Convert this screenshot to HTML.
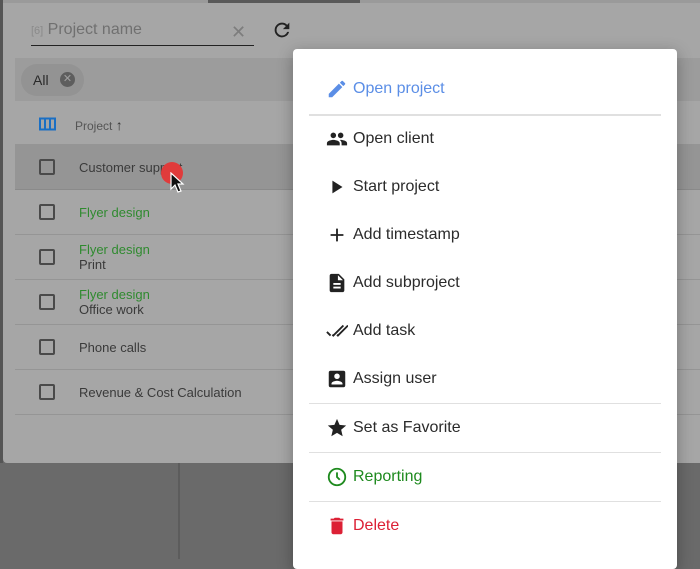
<!DOCTYPE html>
<html style="background:#6a6a6a"><head><style>
*{margin:0;padding:0;box-sizing:border-box}
body{width:700px;height:559px;overflow:hidden;background:#6a6a6a;font-family:"Liberation Sans",Roboto,sans-serif;position:relative}
.abs{position:absolute}
.dlg{left:3px;top:0;width:697px;height:463px;background:#a6a6a6;border-radius:0 0 0 4px}
.row{position:absolute;left:15px;width:700px;border-bottom:1px solid #959595}
.cb{position:absolute;left:24px;width:16px;height:16px;border:2px solid #4a4a4a;border-radius:2px}
.t{position:absolute;left:64px;font-size:13px;color:#3a3a3a}
.g{color:#2f8a2f}
.menu{left:293px;top:49px;width:384px;height:520px;background:#fff;border-radius:4px;box-shadow:0 4px 16px rgba(0,0,0,.3)}
.it{position:absolute;left:0;width:384px;height:24px;font-size:16px;color:#2b2b2b}
.it svg{position:absolute;left:33px;top:1px;width:22px;height:22px}
.it span{position:absolute;left:60px;top:3px}
.dv{position:absolute;left:16px;width:352px;height:1px;background:#e0e0e0}
</style></head><body>
<div class="abs" style="left:0;top:463px;width:700px;height:96px;background:#6a6a6a"></div>
<div class="abs" style="left:0;top:0;width:3px;height:463px;background:#555"></div>
<div class="abs dlg">
  <div class="abs" style="left:0;top:0;width:697px;height:3px;background:#9a9a9a"></div>
  <div class="abs" style="left:205px;top:0;width:152px;height:3px;background:#595959"></div>
  <div class="abs" style="left:28px;top:21px;font-size:16px;color:#707070"><span style="font-size:11px;color:#8a8a8a">[6]</span> Project name</div>
  <div class="abs" style="left:228px;top:22px;font-size:18px;color:#7d7d7d">✕</div>
  <div class="abs" style="left:28px;top:45px;width:223px;height:1px;background:#222"></div>
  <svg class="abs" style="left:268px;top:19px" width="22" height="22" viewBox="0 0 24 24"><path fill="#222" d="M17.65 6.35A7.96 7.96 0 0 0 12 4a8 8 0 1 0 7.73 10h-2.08A6 6 0 1 1 12 6c1.66 0 3.14.69 4.22 1.78L13 11h7V4l-2.35 2.35z"/></svg>
  <div class="abs" style="left:12px;top:58px;width:685px;height:43px;background:#9c9c9c"></div>
  <div class="abs" style="left:18px;top:64px;width:63px;height:32px;border-radius:16px;background:#939393"></div>
  <div class="abs" style="left:30px;top:72px;font-size:14px;color:#2a2a2a">All</div>
  <div class="abs" style="left:57px;top:72px;width:15px;height:15px;border-radius:50%;background:#5e5e5e;color:#a0a0a0;font-size:11px;line-height:15px;text-align:center">✕</div>
  <svg class="abs" style="left:36px;top:117px" width="17" height="14" viewBox="0 0 17 14"><rect x="1" y="1.5" width="15" height="11" fill="none" stroke="#1a6fc4" stroke-width="2"/><path d="M6 2v10M11 2v10" stroke="#1a6fc4" stroke-width="2"/></svg>
  <div class="abs" style="left:72px;top:117px;font-size:12px;color:#555">Project <b style="font-size:14px;color:#333">↑</b></div>
  <div class="row" style="top:144px;height:46px;left:12px;background:#959595;border-bottom-color:#8a8a8a"><div class="cb" style="top:15px"></div><div class="t" style="top:16px">Customer support</div></div>
  <div class="row" style="top:190px;height:45px;left:12px"><div class="cb" style="top:14px"></div><div class="t g" style="top:15px">Flyer design</div></div>
  <div class="row" style="top:235px;height:45px;left:12px"><div class="cb" style="top:14px"></div><div class="t" style="top:7px;line-height:15px"><span class="g">Flyer design</span><br>Print</div></div>
  <div class="row" style="top:280px;height:45px;left:12px"><div class="cb" style="top:14px"></div><div class="t" style="top:7px;line-height:15px"><span class="g">Flyer design</span><br>Office work</div></div>
  <div class="row" style="top:325px;height:45px;left:12px"><div class="cb" style="top:14px"></div><div class="t" style="top:15px">Phone calls</div></div>
  <div class="row" style="top:370px;height:45px;left:12px"><div class="cb" style="top:14px"></div><div class="t" style="top:15px">Revenue &amp; Cost Calculation</div></div>
</div>
<div class="abs" style="left:161px;top:162px;width:22px;height:22px;border-radius:50%;background:#e03b3b"></div>
<svg class="abs" style="left:170px;top:172px" width="16" height="22" viewBox="0 0 16 22"><path d="M1 1v16l4-4 3 7 3-1-3-7h5z" fill="#111" stroke="#fff" stroke-width="1.2"/></svg>
<div class="abs" style="left:178px;top:463px;width:2px;height:96px;background:#5c5c5c"></div>
<div class="abs menu">
  <div class="it" style="top:28px;color:#5b8ee6"><svg viewBox="0 0 24 24"><path fill="#5b8ee6" d="M3 17.25V21h3.75L17.81 9.94l-3.75-3.75L3 17.25zM20.71 7.04a1 1 0 0 0 0-1.41l-2.34-2.34a1 1 0 0 0-1.41 0l-1.83 1.83 3.75 3.75 1.83-1.83z"/></svg><span>Open project</span></div>
  <div class="dv" style="top:65px;height:2px"></div>
  <div class="it" style="top:78px"><svg viewBox="0 0 24 24"><path fill="#222" d="M16 11c1.66 0 2.99-1.34 2.99-3S17.66 5 16 5s-3 1.34-3 3 1.34 3 3 3zm-8 0c1.66 0 2.99-1.34 2.99-3S9.66 5 8 5 5 6.34 5 8s1.34 3 3 3zm0 2c-2.33 0-7 1.17-7 3.5V19h14v-2.5C15 14.17 10.33 13 8 13zm8 0c-.29 0-.62.02-.97.05 1.160.84 1.97 1.97 1.97 3.45V19h6v-2.5c0-2.33-4.67-3.5-7-3.5z"/></svg><span>Open client</span></div>
  <div class="it" style="top:126px"><svg viewBox="0 0 24 24"><path fill="#222" d="M7 5v14l11-7z"/></svg><span>Start project</span></div>
  <div class="it" style="top:174px"><svg viewBox="0 0 24 24"><path fill="#222" d="M19 13h-6v6h-2v-6H5v-2h6V5h2v6h6v2z"/></svg><span>Add timestamp</span></div>
  <div class="it" style="top:222px"><svg viewBox="0 0 24 24"><path fill="#222" d="M14 2H6c-1.1 0-2 .9-2 2v16c0 1.1.9 2 2 2h12c1.1 0 2-.9 2-2V8l-6-6zm2 16H8v-2h8v2zm0-4H8v-2h8v2zm-3-5V3.5L18.5 9H13z"/></svg><span>Add subproject</span></div>
  <div class="it" style="top:270px"><svg viewBox="0 0 24 24"><path fill="none" stroke="#222" stroke-width="2" d="M1 13l4 4M7 16l1 1L19 6M12 16l1 1L24 6"/></svg><span>Add task</span></div>
  <div class="it" style="top:318px"><svg viewBox="0 0 24 24"><path fill="#222" d="M3 5v14a2 2 0 0 0 2 2h14a2 2 0 0 0 2-2V5a2 2 0 0 0-2-2H5a2 2 0 0 0-2 2zm12 4a3 3 0 1 1-6 0 3 3 0 0 1 6 0zm-9 8c0-2 4-3.1 6-3.1s6 1.1 6 3.1v1H6v-1z"/></svg><span>Assign user</span></div>
  <div class="dv" style="top:354px"></div>
  <div class="it" style="top:367px"><svg viewBox="0 0 24 24"><path fill="#222" d="M12 17.27L18.180 21l-1.64-7.03L22 9.24l-7.19-.61L12 2 9.19 8.63 2 9.24l5.46 4.73L5.82 21z"/></svg><span>Set as Favorite</span></div>
  <div class="dv" style="top:403px"></div>
  <div class="it" style="top:416px;color:#1e8a1e"><svg viewBox="0 0 24 24"><circle cx="12" cy="12" r="9" fill="none" stroke="#1e8a1e" stroke-width="2"/><path d="M12 7v5l3 3" fill="none" stroke="#1e8a1e" stroke-width="2"/></svg><span>Reporting</span></div>
  <div class="dv" style="top:452px"></div>
  <div class="it" style="top:465px;color:#dc2035"><svg viewBox="0 0 24 24"><path fill="#dc2035" d="M6 19c0 1.1.9 2 2 2h8c1.1 0 2-.9 2-2V7H6v12zM19 4h-3.5l-1-1h-5l-1 1H5v2h14V4z"/></svg><span>Delete</span></div>
</div>
</body></html>
